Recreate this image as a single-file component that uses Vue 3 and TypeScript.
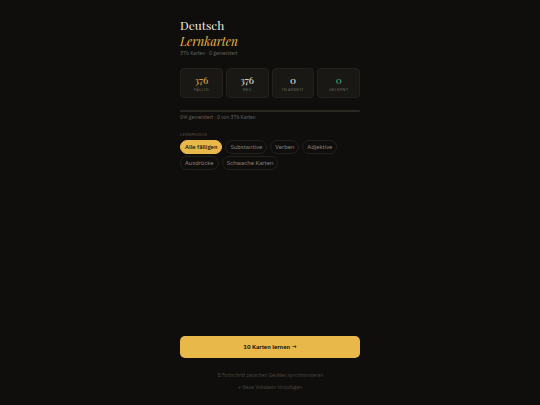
<script setup lang="ts">
import { computed, ref } from 'vue'

interface Stat {
  value: number
  label: string
  tone: string
}

const total = 376
const mastered = 0
const sessionSize = 10

const stats: Stat[] = [
  { value: 376, label: 'Fällig', tone: 'gold' },
  { value: 376, label: 'Neu', tone: 'plain' },
  { value: 0, label: 'In Arbeit', tone: 'plain' },
  { value: mastered, label: 'Gelernt', tone: 'green' },
]

const modes = ['Alle fälligen', 'Substantive', 'Verben', 'Adjektive', 'Ausdrücke', 'Schwache Karten']
const activeMode = ref(modes[0])
const percent = computed(() => Math.round((mastered / total) * 100))
</script>

<template>
  <main class="page">
    <header class="header">
      <h1 class="title">Deutsch<br /><em>Lernkarten</em></h1>
      <p class="subtitle">{{ total }} Karten · {{ mastered }} gemeistert</p>
    </header>

    <section class="stats" aria-label="Statistik">
      <div v-for="stat in stats" :key="stat.label" class="stat">
        <span class="value" :class="stat.tone">{{ stat.value }}</span>
        <span class="label">{{ stat.label }}</span>
      </div>
    </section>

    <section class="progress">
      <div class="track"><div class="fill" :style="{ width: percent + '%' }"></div></div>
      <p class="note">{{ percent }}% gemeistert · {{ mastered }} von {{ total }} Karten</p>
    </section>

    <section class="modes">
      <h2 class="heading">Lernmodus</h2>
      <div class="chips">
        <button
          v-for="mode in modes"
          :key="mode"
          type="button"
          class="chip"
          :class="{ active: mode === activeMode }"
          :aria-pressed="mode === activeMode"
          @click="activeMode = mode"
        >{{ mode }}</button>
      </div>
    </section>

    <footer class="footer">
      <button type="button" class="start">{{ sessionSize }} Karten lernen →</button>
      <button type="button" class="quiet">⇅ Fortschritt zwischen Geräten synchronisieren</button>
      <button type="button" class="quiet">+ Neue Vokabeln hinzufügen</button>
    </footer>
  </main>
</template>

<style>
body {
  background: #0f0e0c;
}
</style>

<style scoped>
.page {
  box-sizing: border-box;
  display: flex;
  flex-direction: column;
  width: 100%;
  max-width: 196px;
  min-height: 100vh;
  margin: 0 auto;
  padding: 17px 8px 14px;
  color: #f0ece0;
  font-family: "IBM Plex Sans", "Noto Sans", "Open Sans", sans-serif;
  font-size: 5px;
  line-height: 8px;
}

button {
  margin: 0;
  font-family: inherit;
  cursor: pointer;
}

.title,
.subtitle,
.note,
.heading {
  margin: 0;
  font-weight: 400;
}

.title {
  font-family: "Playfair Display", "Liberation Serif", serif;
  font-size: 12px;
  line-height: 16px;
}

.title em {
  color: #e8b84b;
}

.subtitle {
  color: #6b675e;
}

.stats {
  display: grid;
  grid-template-columns: repeat(4, 1fr);
  gap: 3px;
  margin-top: 11px;
}

.stat {
  display: flex;
  flex-direction: column;
  align-items: center;
  padding: 6px 2px 4px;
  border: 1px solid #23211c;
  border-radius: 4px;
  background: #1a1814;
}

.value {
  font-family: "Playfair Display", "Liberation Serif", serif;
  font-size: 10px;
  line-height: 11px;
}

.gold {
  color: #e8b84b;
}

.green {
  color: #4caf7d;
}

.label {
  color: #6b675e;
  font-size: 4px;
  line-height: 7px;
  letter-spacing: 0.08em;
  text-transform: uppercase;
}

.progress {
  margin-top: 12px;
}

.track {
  height: 2px;
  overflow: hidden;
  border-radius: 1px;
  background: #2a2822;
}

.fill {
  height: 100%;
  background: #4caf7d;
}

.note {
  margin-top: 1px;
  color: #6b675e;
}

.modes {
  margin-top: 10px;
}

.heading {
  color: #5f5b52;
  font-size: 4px;
  line-height: 7px;
  letter-spacing: 0.1em;
  text-transform: uppercase;
}

.chips {
  display: flex;
  flex-wrap: wrap;
  gap: 2px 3px;
  margin-top: 2px;
}

.chip {
  padding: 2px 4px;
  border: 1px solid #23211c;
  border-radius: 8px;
  background: transparent;
  color: #8f8b83;
  font-size: 6px;
  line-height: 8px;
}

.chip.active {
  border-color: #e8b84b;
  background: #e8b84b;
  color: #0f0e0c;
  font-weight: 500;
}

.footer {
  display: flex;
  flex-direction: column;
  gap: 4px;
  margin-top: auto;
}

.start {
  margin-bottom: 9px;
  padding: 6px;
  border: 0;
  border-radius: 5px;
  background: #e8b84b;
  color: #0f0e0c;
  font-size: 6px;
  line-height: 10px;
  font-weight: 600;
}

.quiet {
  padding: 0;
  border: 0;
  background: transparent;
  color: #4a4740;
  font-size: 5px;
  line-height: 8px;
}
</style>
